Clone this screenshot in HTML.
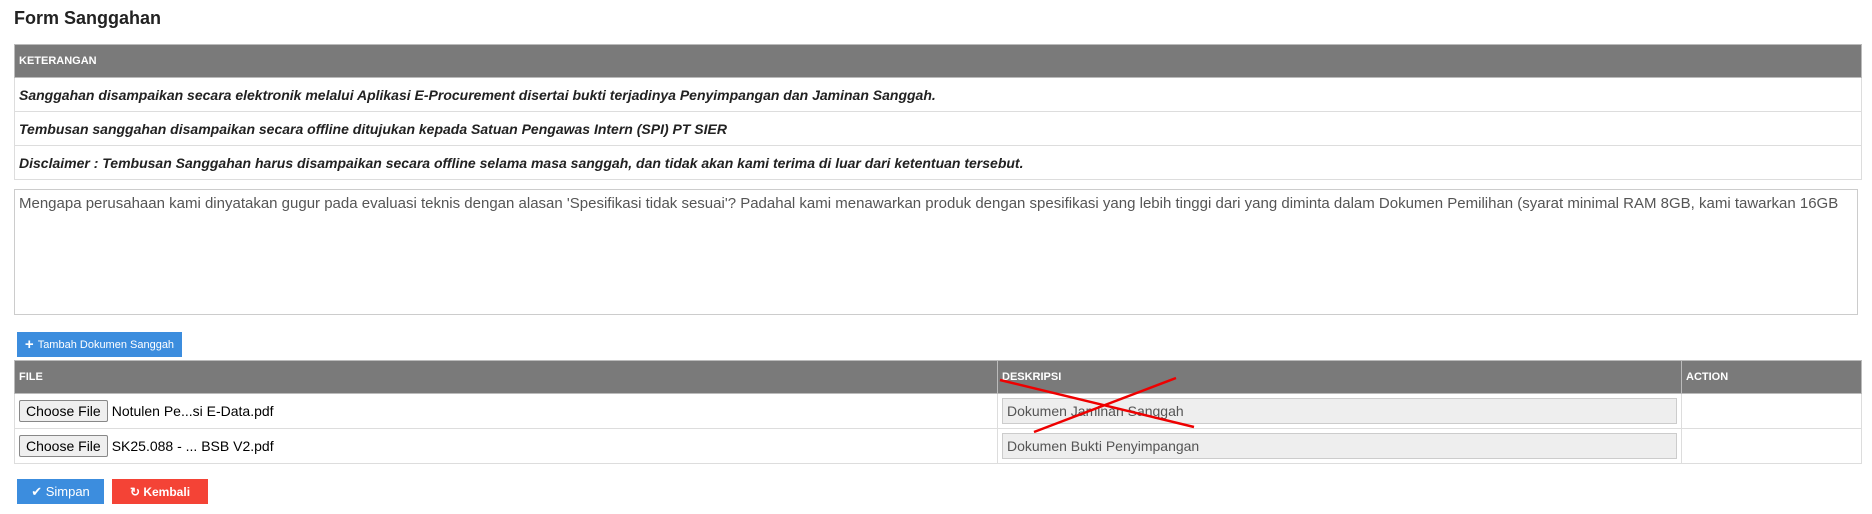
<!DOCTYPE html>
<html><head><meta charset="utf-8"><style>
body{margin:0;width:1872px;height:514px;background:#fff;font-family:"Liberation Sans",sans-serif;position:relative;overflow:hidden}
.a{position:absolute}
h1{position:absolute;left:14px;top:8px;margin:0;font-size:18px;font-weight:bold;color:#222}
table{border-collapse:collapse;position:absolute}
td,th{border:1px solid #ddd;padding:0 4px;text-align:left}
th{background:#7a7a7a;color:#fff;font-size:11px;font-weight:bold;border-color:#bbb}
.t1 td{font-size:14px;font-style:italic;font-weight:bold;color:#222;height:33px}
.btn{position:absolute;color:#fff;font-size:11px;display:flex;align-items:center;justify-content:center;gap:4px}
.cf{display:inline-block;border:1px solid #888;background:#efefef;border-radius:2px;padding:2px 6px;font-size:14px;color:#000;margin-right:4px}
.inp{border:1px solid #ccc;background:#eee;height:24px;font-size:14px;color:#555;line-height:24px;padding-left:4px}
</style></head><body>
<h1>Form Sanggahan</h1>
<table class="t1" style="left:14px;top:44px;width:1848px">
<tr><th style="height:32px">KETERANGAN</th></tr>
<tr><td>Sanggahan disampaikan secara elektronik melalui Aplikasi E-Procurement disertai bukti terjadinya Penyimpangan dan Jaminan Sanggah.</td></tr>
<tr><td>Tembusan sanggahan disampaikan secara offline ditujukan kepada Satuan Pengawas Intern (SPI) PT SIER</td></tr>
<tr><td>Disclaimer : Tembusan Sanggahan harus disampaikan secara offline selama masa sanggah, dan tidak akan kami terima di luar dari ketentuan tersebut.</td></tr>
</table>
<div class="a" style="left:14px;top:189px;width:1844px;height:126px;border:1px solid #ccc;font-size:15px;color:#555;padding:5px 4px;box-sizing:border-box;white-space:nowrap;overflow:hidden">Mengapa perusahaan kami dinyatakan gugur pada evaluasi teknis dengan alasan 'Spesifikasi tidak sesuai'? Padahal kami menawarkan produk dengan spesifikasi yang lebih tinggi dari yang diminta dalam Dokumen Pemilihan (syarat minimal RAM 8GB, kami tawarkan 16GB</div>
<div class="btn" style="left:17px;top:332px;width:165px;height:25px;background:#3c8dde"><b style="font-size:15px">+</b>Tambah Dokumen Sanggah</div>
<table style="left:14px;top:360px;width:1848px">
<tr><th style="width:974px;height:32px">FILE</th><th style="width:675px">DESKRIPSI</th><th>ACTION</th></tr>
<tr><td style="height:34px"><span class="cf">Choose File</span><span style="font-size:14px">Notulen Pe...si E-Data.pdf</span></td><td><div class="inp">Dokumen Jaminan Sanggah</div></td><td></td></tr>
<tr><td style="height:34px"><span class="cf">Choose File</span><span style="font-size:14px">SK25.088 - ... BSB V2.pdf</span></td><td><div class="inp">Dokumen Bukti Penyimpangan</div></td><td></td></tr>
</table>
<svg class="a" style="left:0;top:0" width="1872" height="514"><line x1="1000" y1="380" x2="1194" y2="427" stroke="#e00" stroke-width="2.5"/><line x1="1176" y1="378" x2="1034" y2="432" stroke="#e00" stroke-width="2.5"/></svg>
<div class="btn" style="left:17px;top:479px;width:87px;height:25px;background:#3c8dde;font-size:13px">✔ Simpan</div>
<div class="btn" style="left:112px;top:479px;width:96px;height:25px;background:#f44336;font-size:12px;font-weight:bold">↻ Kembali</div>
</body></html>
